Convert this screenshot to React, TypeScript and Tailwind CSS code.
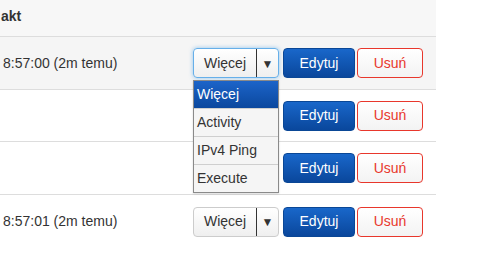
import React from "react";

const font = { fontFamily: '"Liberation Sans", Arial, sans-serif' };

function MoreButton({ focused }: { focused?: boolean }) {
  return (
    <div
      className={
        "flex h-[30px] w-[86px] rounded-[4px] border bg-gradient-to-b from-white to-[#efefef] text-[14px] text-[#333] " +
        (focused
          ? "border-[#66afe9] shadow-[0_0_4px_rgba(102,175,233,0.7)]"
          : "border-[#cccccc]")
      }
    >
      <div className="flex w-[63px] items-center justify-center border-r border-[#333]">Więcej</div>
      <div className="flex flex-1 items-center justify-center pt-[1px] text-[12px] leading-none">▼</div>
    </div>
  );
}

function Actions({ focused }: { focused?: boolean }) {
  return (
    <div className="flex items-center">
      <MoreButton focused={focused} />
      <div className="ml-[4px] flex h-[30px] w-[72px] items-center justify-center rounded-[4px] border border-[#0a4796] bg-gradient-to-b from-[#1967ca] to-[#0a479c] text-[14px] text-white">
        Edytuj
      </div>
      <div className="ml-[2px] flex h-[30px] w-[66px] items-center justify-center rounded-[4px] border border-[#e8372c] bg-gradient-to-b from-white to-[#f3f3f3] text-[14px] text-[#e8372c]">
        Usuń
      </div>
    </div>
  );
}

function Row({ text, h, bg, focused, border = true }: { text: string; h: string; bg: string; focused?: boolean; border?: boolean }) {
  return (
    <div className={"flex items-center " + h + " " + bg + (border ? " border-b border-[#dddddd]" : "")}>
      <div className="w-[193px] pl-[3px] text-[14px] text-[#333]">{text}</div>
      <Actions focused={focused} />
    </div>
  );
}

export default function App() {
  return (
    <div className="relative h-[270px] w-[480px] overflow-hidden bg-white" style={font}>
      <div className="w-[436px]">
        <div className="flex h-[37px] items-center border-b border-[#dddddd] bg-[#f7f7f7] pb-[3px] pl-[1px] text-[14px] font-bold text-[#333]">
          akt
        </div>
        <Row text="8:57:00 (2m temu)" h="h-[53px]" bg="bg-[#f5f5f5]" focused />
        <Row text="" h="h-[52px]" bg="bg-white" />
        <Row text="" h="h-[53px]" bg="bg-white" />
        <Row text="8:57:01 (2m temu)" h="h-[53px]" bg="bg-white" border={false} />
      </div>
      <div className="absolute left-[193px] top-[80px] w-[86px] border border-[#8a8a8a] bg-[#f5f5f5] text-[14px] text-[#333] shadow-[0_1px_2px_rgba(0,0,0,0.15)]">
        <div className="flex h-[27px] items-center bg-gradient-to-b from-[#1c64c9] to-[#0b489e] pl-[3px] text-white">Więcej</div>
        <div className="flex h-[28px] items-center border-t border-[#cfcfcf] pl-[3px]">Activity</div>
        <div className="flex h-[28px] items-center border-t border-[#cfcfcf] pl-[3px]">IPv4 Ping</div>
        <div className="flex h-[28px] items-center border-t border-[#cfcfcf] pl-[3px]">Execute</div>
      </div>
    </div>
  );
}
